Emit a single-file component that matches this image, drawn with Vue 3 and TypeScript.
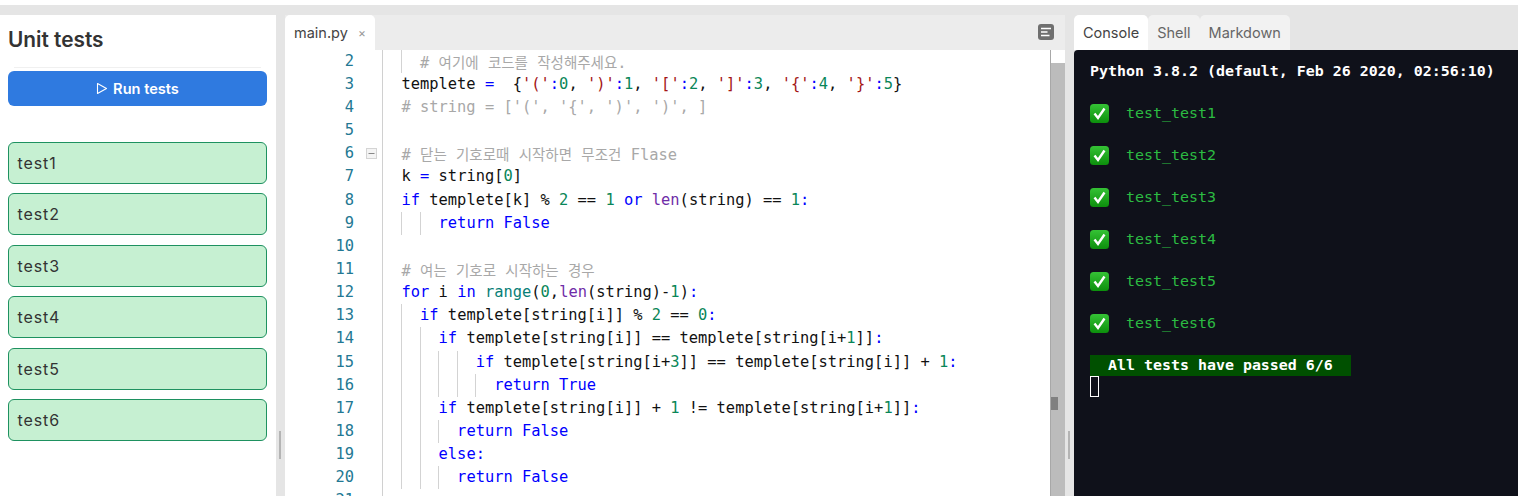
<script setup lang="ts">
type Tok = [string, string?]
interface Line { n: number; guides: number; toks: Tok[] }

const tests = ['test1', 'test2', 'test3', 'test4', 'test5', 'test6']
const tabs = [
  { name: 'Console', active: true },
  { name: 'Shell', active: false },
  { name: 'Markdown', active: false },
]

const lines: Line[] = [
  { n: 2, guides: 1, toks: [['  # ', 'c'], ['여기에', 'ck'], [' ', 'c'], ['코드를', 'ck'], [' ', 'c'], ['작성해주세요', 'ck'], ['.', 'c']] },
  { n: 3, guides: 0, toks: [['templete '], ['=', 'k'], ['  {'], ["'('", 's'], [':', 'k'], ['0', 'n'], [', '], ["')'", 's'], [':', 'k'], ['1', 'n'], [', '], ["'['", 's'], [':', 'k'], ['2', 'n'], [', '], ["']'", 's'], [':', 'k'], ['3', 'n'], [', '], ["'{'", 's'], [':', 'k'], ['4', 'n'], [', '], ["'}'", 's'], [':', 'k'], ['5', 'n'], ['}']] },
  { n: 4, guides: 0, toks: [["# string = ['(', '{', ')', ')', ]", 'c']] },
  { n: 5, guides: 0, toks: [] },
  { n: 6, guides: 0, toks: [['# ', 'c'], ['닫는', 'ck'], [' ', 'c'], ['기호로때', 'ck'], [' ', 'c'], ['시작하면', 'ck'], [' ', 'c'], ['무조건', 'ck'], [' Flase', 'c']] },
  { n: 7, guides: 0, toks: [['k '], ['=', 'k'], [' string['], ['0', 'n'], [']']] },
  { n: 8, guides: 0, toks: [['if', 'k'], [' templete[k] % '], ['2', 'n'], [' == '], ['1', 'n'], [' '], ['or', 'k'], [' '], ['len', 'f'], ['(string) == '], ['1', 'n'], [':', 'k']] },
  { n: 9, guides: 2, toks: [['    '], ['return False', 'k']] },
  { n: 10, guides: 0, toks: [] },
  { n: 11, guides: 0, toks: [['# ', 'c'], ['여는', 'ck'], [' ', 'c'], ['기호로', 'ck'], [' ', 'c'], ['시작하는', 'ck'], [' ', 'c'], ['경우', 'ck']] },
  { n: 12, guides: 0, toks: [['for', 'k'], [' i '], ['in', 'k'], [' '], ['range', 't'], ['('], ['0', 'n'], [','], ['len', 'f'], ['(string)-'], ['1', 'n'], [')'], [':', 'k']] },
  { n: 13, guides: 1, toks: [['  '], ['if', 'k'], [' templete[string[i]] % '], ['2', 'n'], [' == '], ['0', 'n'], [':', 'k']] },
  { n: 14, guides: 2, toks: [['    '], ['if', 'k'], [' templete[string[i]] == templete[string[i+'], ['1', 'n'], [']]'], [':', 'k']] },
  { n: 15, guides: 4, toks: [['        '], ['if', 'k'], [' templete[string[i+'], ['3', 'n'], [']] == templete[string[i]] + '], ['1', 'n'], [':', 'k']] },
  { n: 16, guides: 5, toks: [['          '], ['return True', 'k']] },
  { n: 17, guides: 2, toks: [['    '], ['if', 'k'], [' templete[string[i]] + '], ['1', 'n'], [' != templete[string[i+'], ['1', 'n'], [']]'], [':', 'k']] },
  { n: 18, guides: 3, toks: [['      '], ['return False', 'k']] },
  { n: 19, guides: 2, toks: [['    '], ['else:', 'k']] },
  { n: 20, guides: 3, toks: [['      '], ['return False', 'k']] },
  { n: 21, guides: 0, toks: [] },
]

const results = ['test_test1', 'test_test2', 'test_test3', 'test_test4', 'test_test5', 'test_test6']
const passed = '  All tests have passed 6/6'
const guideX = (i: number): string => `${i * 18.6}px`
</script>

<template>
  <div class="page">
    <div class="topline"></div>
    <div class="workspace">
      <aside class="tests">
        <h1 class="title">Unit tests</h1>
        <div class="rule"></div>
        <button class="run" type="button">
          <svg width="12" height="13" viewBox="0 0 12 13" fill="none" stroke="#fff" stroke-width="1.1">
            <path d="M1.5 1.5 L10.5 6.5 L1.5 11.5 Z" stroke-linejoin="round" />
          </svg>
          <span>Run tests</span>
        </button>
        <ul class="list">
          <li v-for="t in tests" :key="t" class="card">{{ t }}</li>
        </ul>
      </aside>

      <div class="gutter"><span class="handle"></span></div>

      <section class="editor">
        <header class="edhead">
          <div class="tab">
            <span>main.py</span>
            <span class="close">×</span>
          </div>
          <svg class="outline" width="16" height="16" viewBox="0 0 16 16">
            <rect x="0" y="0" width="16" height="16" rx="3" fill="#6f6f6f" />
            <path d="M3 4.5H13M3 8H9.5M3 11.5H11.5" stroke="#fff" stroke-width="1.4" />
          </svg>
        </header>
        <div class="edbody">
          <div class="code">
            <div v-for="l in lines" :key="l.n" class="line">
              <span class="num">{{ l.n }}</span>
              <span class="fold">
                <svg v-if="l.n === 6" width="11" height="11" viewBox="0 0 11 11">
                  <rect x="0.5" y="0.5" width="10" height="10" fill="#f4f4f4" stroke="#d4d4d4" />
                  <path d="M2.5 5.5H8.5" stroke="#888" />
                </svg>
              </span>
              <span class="text">
                <i v-for="g in l.guides" :key="g" class="guide" :style="{ left: guideX(g - 1) }"></i>
                <span v-for="(tk, i) in l.toks" :key="i" :class="tk[1]">{{ tk[0] }}</span>
              </span>
            </div>
          </div>
          <div class="scroll">
            <div class="scrolltop"></div>
            <div class="track"><span class="thumb"></span></div>
          </div>
        </div>
      </section>

      <div class="gutter gutter-r"><span class="handle"></span></div>

      <section class="side">
        <nav class="tabs">
          <div v-for="t in tabs" :key="t.name" class="stab" :class="{ on: t.active }">{{ t.name }}</div>
        </nav>
        <div class="console">
          <div class="banner">Python 3.8.2 (default, Feb 26 2020, 02:56:10)</div>
          <div v-for="r in results" :key="r" class="result">
            <svg class="check" width="19" height="19" viewBox="0 0 19 19">
              <defs>
                <linearGradient id="chk" x1="0" y1="0" x2="0" y2="1">
                  <stop offset="0" stop-color="#35c235" />
                  <stop offset="1" stop-color="#0c8f0c" />
                </linearGradient>
              </defs>
              <rect x="0" y="0" width="19" height="19" rx="3.5" fill="url(#chk)" />
              <path d="M4.5 9.5 L8 14 L14.5 4.5" fill="none" stroke="#fff" stroke-width="2.4" />
            </svg>
            <span>{{ r }}</span>
          </div>
          <div class="passed">{{ passed }}</div>
          <div class="cursor"></div>
        </div>
      </section>
    </div>
  </div>
</template>

<style>
html, body { margin: 0; background: #fff; overflow: hidden; }
</style>

<style scoped>
.page {
  width: 1518px;
  height: 496px;
  overflow: hidden;
  display: flex;
  flex-direction: column;
  font-family: "Inter", "Noto Sans", sans-serif;
  color: #333;
}
.topline { height: 5px; background: #fff; flex: none; }
.workspace {
  flex: 1;
  min-height: 0;
  display: flex;
  background: #e5e5e5;
  padding-top: 10px;
}
.tests {
  width: 276px;
  flex: none;
  background: #fff;
  box-sizing: border-box;
  padding: 0 9px 0 8px;
  display: flex;
  flex-direction: column;
}
.title {
  margin: 12px 0 0;
  font-size: 20.8px;
  line-height: 25px;
  font-weight: 600;
  color: #333;
}
.rule { height: 1px; background: #f0f0f0; margin: 15px 6px 3px; }
.run {
  height: 35px;
  border: 0;
  border-radius: 6px;
  background: #2f7ae0;
  color: #fff;
  font: 600 14.6px "Inter", sans-serif;
  display: flex;
  align-items: center;
  justify-content: center;
  gap: 5px;
  padding: 0;
}
.list {
  list-style: none;
  margin: 36px 0 0;
  padding: 0;
  display: flex;
  flex-direction: column;
  gap: 9.4px;
}
.card {
  height: 42px;
  box-sizing: border-box;
  border: 1px solid #1e9160;
  border-radius: 6px;
  background: #c6f0d2;
  padding-left: 8.5px;
  font-size: 16px;
  letter-spacing: 0.9px;
  line-height: 41px;
  color: #333;
}
.gutter {
  width: 9px;
  flex: none;
  position: relative;
  display: flex;
  align-items: flex-end;
  justify-content: center;
}
.handle {
  width: 2px;
  height: 28px;
  background: #b4b4b4;
  margin-bottom: 37px;
  margin-right: 1px;
}
.editor {
  width: 780px;
  flex: none;
  display: flex;
  flex-direction: column;
  min-width: 0;
}
.edhead {
  height: 35px;
  flex: none;
  display: flex;
  align-items: flex-start;
  justify-content: space-between;
  background: #ececec;
}
.tab {
  width: 90px;
  height: 35px;
  box-sizing: border-box;
  background: #fff;
  border-radius: 5px 5px 0 0;
  padding: 0 9px;
  display: flex;
  align-items: center;
  justify-content: space-between;
  font-size: 14.5px;
  color: #444;
}
.close { font-size: 12px; color: #999; }
.outline { margin: 9px 11px 0 0; }
.edbody {
  flex: 1;
  min-height: 0;
  display: flex;
  background: #fff;
  overflow: hidden;
}
.code {
  flex: 1;
  min-width: 0;
  margin-top: -0.3px;
  font-family: "DejaVu Sans Mono", "Noto Sans CJK KR", monospace;
  font-size: 15.4px;
  color: #111;
}
.line {
  height: 23.15px;
  line-height: 23.15px;
  display: flex;
  white-space: pre;
}
.num {
  width: 69px;
  flex: none;
  text-align: right;
  color: #237893;
}
.fold {
  width: 29px;
  flex: none;
  display: flex;
  align-items: center;
  justify-content: center;
  box-sizing: border-box;
  border-right: 1px solid #d0d0d0;
  padding-left: 6px;
}
.text {
  position: relative;
  padding-left: 18.5px;
  flex: 1;
}
.guide {
  position: absolute;
  top: 0;
  bottom: 0;
  width: 1px;
  margin-left: 18px;
  background: #d3d3d3;
}
.k { color: #0000ff; }
.c { color: #a8a8a8; }
.ck { color: #a8a8a8; font-family: "Noto Sans CJK KR", sans-serif; font-size: 14.5px; }
.n { color: #098658; }
.s { color: #a31515; }
.f { color: #6f2da8; }
.t { color: #098077; }
.scroll {
  width: 15px;
  flex: none;
  box-sizing: border-box;
  border-left: 1px solid #a8a8a8;
  display: flex;
  flex-direction: column;
  background: #fff;
}
.scrolltop { height: 13px; flex: none; }
.track {
  flex: 1;
  background: #bcbcbc;
  position: relative;
}
.thumb {
  position: absolute;
  left: 0;
  top: 334px;
  width: 7px;
  height: 13px;
  background: #808080;
}
.side {
  flex: 1;
  min-width: 0;
  display: flex;
  flex-direction: column;
}
.tabs {
  height: 35px;
  flex: none;
  display: flex;
}
.stab {
  padding: 0 9px;
  display: flex;
  align-items: center;
  border-radius: 5px 5px 0 0;
  background: #f2f2f2;
  color: #666;
  font-size: 14.5px;
}
.stab.on { background: #fff; color: #444; }
.console {
  flex: 1;
  min-height: 0;
  background: #0f111a;
  border-radius: 4px 0 0 0;
  padding: 11px 16px 0;
  font-family: "DejaVu Sans Mono", monospace;
  font-size: 14.95px;
  line-height: 21px;
  color: #fff;
  font-weight: 700;
}
.banner { height: 21px; margin-bottom: 21px; }
.result {
  height: 21px;
  margin-bottom: 21px;
  display: flex;
  align-items: center;
  gap: 17px;
  color: #2cbb42;
  font-weight: 400;
}
.check { flex: none; }
.passed {
  width: 261px;
  height: 21px;
  background: #005000;
  white-space: pre;
}
.cursor {
  width: 9px;
  height: 21px;
  box-sizing: border-box;
  border: 1px solid #fff;
}
</style>
